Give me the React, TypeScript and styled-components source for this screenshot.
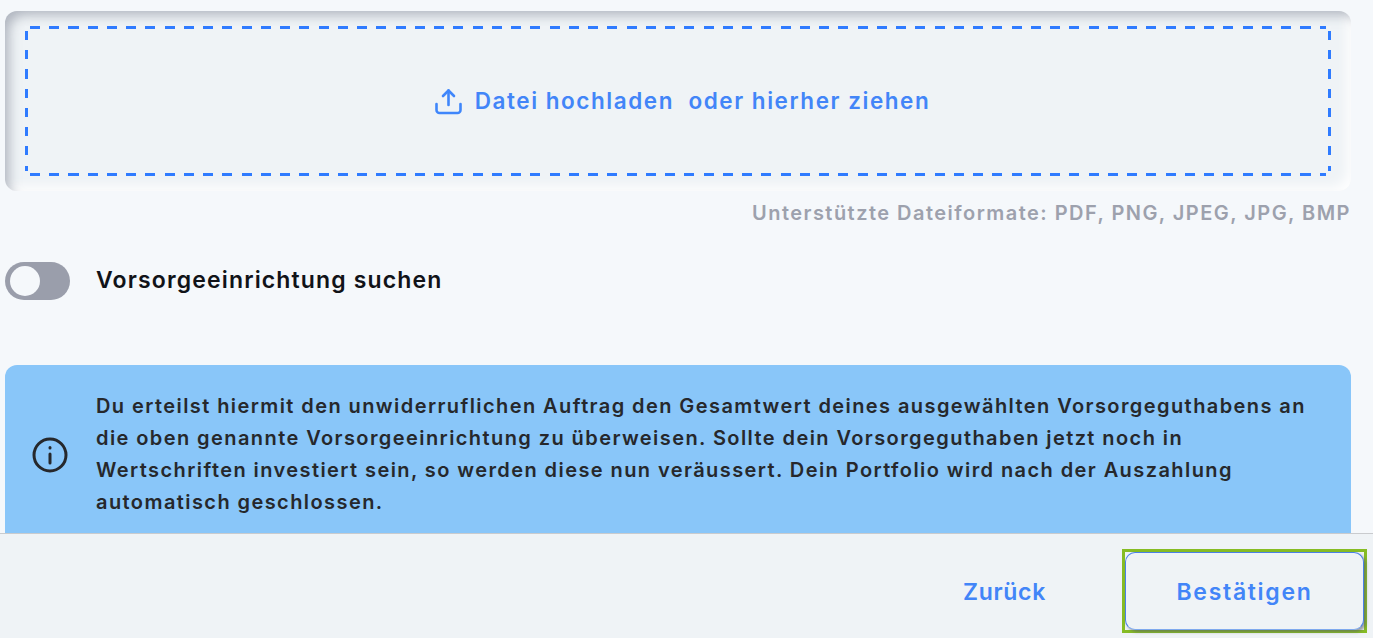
import React from "react";
import styled, { createGlobalStyle } from "styled-components";

const GlobalStyle = createGlobalStyle`
  html, body {
    margin: 0;
    padding: 0;
    height: 100%;
    background: #f5f8fb;
    font-family: "Inter", "Noto Sans", sans-serif;
  }
  * {
    box-sizing: border-box;
  }
`;

const Page = styled.div`
  height: 638px;
  display: flex;
  flex-direction: column;
  overflow: hidden;
`;

const Content = styled.main`
  flex: 1;
  min-height: 0;
  overflow: hidden;
  padding: 11px 22px 0 5px;
`;

const DropShell = styled.div`
  height: 180px;
  padding: 15px 20px;
  border-radius: 12px;
  background: #eff3f6;
  box-shadow: inset 8px 8px 12px -4px rgba(150, 155, 168, 0.7),
    inset -8px -8px 12px -4px rgba(255, 255, 255, 0.9);
`;

const DropZone = styled.div`
  height: 100%;
  padding-left: 9px;
  display: flex;
  align-items: center;
  justify-content: center;
  gap: 13px;
  color: #4285f8;
  font-size: 22.5px;
  font-weight: 600;
  background-color: #eff3f6;
  background-image: repeating-linear-gradient(90deg, #2f7bff 0 10px, transparent 10px 19.25px),
    repeating-linear-gradient(90deg, #2f7bff 0 10px, transparent 10px 19.25px),
    repeating-linear-gradient(180deg, #2f7bff 0 9px, transparent 9px 19.25px),
    repeating-linear-gradient(180deg, #2f7bff 0 9px, transparent 9px 19.25px);
  background-size: calc(100% - 10px) 3px, calc(100% - 10px) 3px, 3px calc(100% - 10px), 3px calc(100% - 10px);
  background-position: 5px 0, 5px 100%, 0 5px, 100% 5px;
  background-repeat: no-repeat;
`;

const DropLabel = styled.span`
  white-space: pre;
  letter-spacing: 1.55px;
  margin-bottom: 2px;
`;

const FormatHint = styled.p`
  margin: 11px 0 0;
  text-align: right;
  color: #9da1ad;
  font-size: 20px;
  font-weight: 600;
  line-height: 23px;
  letter-spacing: 1.47px;
`;

const ToggleRow = styled.div`
  margin-top: 37px;
  display: flex;
  align-items: center;
  gap: 26px;
`;

const Toggle = styled.span`
  width: 65px;
  height: 38px;
  padding: 4px 5px;
  border-radius: 19px;
  background: #9a9eab;
  display: flex;
`;

const Knob = styled.span`
  width: 30px;
  height: 30px;
  border-radius: 50%;
  background: #f5f8fb;
`;

const ToggleLabel = styled.span`
  color: #111318;
  font-size: 23px;
  font-weight: 600;
  line-height: 34px;
  letter-spacing: 1.15px;
  margin-bottom: 3px;
`;

const InfoBox = styled.section`
  margin-top: 65px;
  padding: 25px 20px 0 27px;
  height: 200px;
  border-radius: 12px;
  background: #89c6f9;
  display: flex;
  align-items: flex-start;
  gap: 28px;
`;

const InfoIcon = styled.svg`
  width: 36px;
  height: 36px;
  flex: none;
  margin-top: 47px;
`;

const InfoText = styled.p`
  margin: 0;
  color: #26282c;
  font-size: 20px;
  font-weight: 600;
  line-height: 32px;
  letter-spacing: 1.42px;
`;

const Footer = styled.footer`
  height: 105px;
  flex: none;
  border-top: 1px solid #c9cbce;
  background: #eff3f6;
  display: flex;
  align-items: flex-start;
  justify-content: flex-end;
  padding: 15px 6px 0 0;
  gap: 76px;
`;

const TextButton = styled.button`
  height: 86px;
  border: none;
  background: none;
  padding: 0;
  color: #4285f8;
  font: 600 23px "Inter", sans-serif;
  letter-spacing: 0.7px;
`;

const FocusRing = styled.span`
  width: 245px;
  height: 84px;
  border: 3px solid #86bc24;
  display: flex;
`;

const PrimaryButton = styled.button`
  flex: 1;
  padding-top: 2px;
  border: 1.5px solid #4a80e8;
  border-bottom-color: #7fa9ee;
  border-radius: 10px;
  background: #eff3f6;
  color: #4285f8;
  font: 600 23px "Inter", sans-serif;
  letter-spacing: 1.7px;
  box-shadow: 2px 2px 3px rgba(90, 95, 105, 0.6);
`;

function UploadIcon() {
  return (
    <svg width="27" height="27" viewBox="0 0 27 27" fill="none" stroke="#3f86fb" strokeWidth="2.6" strokeLinecap="round" strokeLinejoin="round">
      <path d="M13.500 17V2.500" />
      <path d="M8 8l5.500-5.500L19 8" />
      <path d="M1.500 16v6a3 3 0 0 0 3 3h18a3 3 0 0 0 3-3v-6" />
    </svg>
  );
}

function App() {
  return (
    <Page>
      <GlobalStyle />
      <Content>
        <DropShell>
          <DropZone>
            <UploadIcon />
            <DropLabel>Datei hochladen  oder hierher ziehen</DropLabel>
          </DropZone>
        </DropShell>
        <FormatHint>Unterstützte Dateiformate: PDF, PNG, JPEG, JPG, BMP</FormatHint>
        <ToggleRow>
          <Toggle>
            <Knob />
          </Toggle>
          <ToggleLabel>Vorsorgeeinrichtung suchen</ToggleLabel>
        </ToggleRow>
        <InfoBox>
          <InfoIcon viewBox="0 0 36 36" fill="none" stroke="#26282c" strokeWidth="3" strokeLinecap="round">
            <circle cx="18" cy="18" r="16" />
            <path d="M18 17v9" />
            <path d="M18 10.500v.5" />
          </InfoIcon>
          <InfoText>
            Du erteilst hiermit den unwiderruflichen Auftrag den Gesamtwert deines ausgewählten Vorsorgeguthabens an
            die oben genannte Vorsorgeeinrichtung zu überweisen. Sollte dein Vorsorgeguthaben jetzt noch in
            Wertschriften investiert sein, so werden diese nun veräussert. Dein Portfolio wird nach der Auszahlung
            automatisch geschlossen.
          </InfoText>
        </InfoBox>
      </Content>
      <Footer>
        <TextButton>Zurück</TextButton>
        <FocusRing>
          <PrimaryButton>Bestätigen</PrimaryButton>
        </FocusRing>
      </Footer>
    </Page>
  );
}

export default App;
